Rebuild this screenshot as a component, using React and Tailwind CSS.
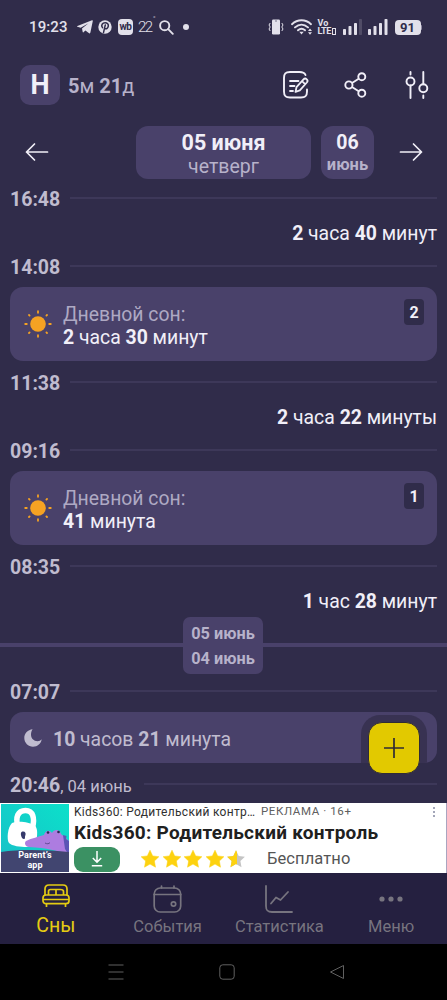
const SunIcon = () => (
  <svg width="28" height="28" viewBox="0 0 28 28" fill="none" stroke="#f5a223" strokeWidth="1.8" strokeLinecap="round">
    <circle cx="14" cy="14" r="7.8" fill="#f5a223" stroke="none" />
    <path d="M14 1.2v1.6M14 25.2v1.6M1.2 14h1.6M25.2 14h1.6M5 5l.6.6M22.4 22.4l.6.6M23 5l-.6.6M5.6 22.4l-.6.6" />
  </svg>
);

const MoonIcon = () => (
  <svg width="18" height="18" viewBox="0 0 18 18" fill="#c0bccf">
    <path d="M8.600.2C3.900.6.300 4.300.300 9c0 4.800 3.900 8.700 8.700 8.700 4.500 0 8.200-3.200 8.700-7.500-.9 1.300-2.500 2-4.200 2C9.800 12.200 7 9.500 7 5.800c0-2.100.5-4 1.600-5.600z" />
  </svg>
);

const Star = ({ half = false }) => (
  <svg width="20" height="20" viewBox="0 0 20 20">
    <path d="M10 1.200l2.700 5.700 6.200.8-4.500 4.300 1.100 6.200L10 15.100l-5.500 3.100 1.100-6.200L1.100 7.700l6.200-.8z" fill={half ? "#c4c4c4" : "#fdd210"} stroke={half ? "none" : "#fdd210"} strokeWidth=".5" />
    {half && <path d="M11 3.300v12.400l-1-.6-5.500 3.100 1.100-6.200L1.100 7.700l6.200-.8L10 1.200z" fill="#fdd210" />}
  </svg>
);

const StatusBar = () => (
  <div className="flex h-[54px] shrink-0 items-center pl-[29px] pr-[25px] text-[#e2e0ea]">
    <span className="w-[39px] text-[15px] font-medium tracking-[0.1px]">19:23</span>
    <svg className="ml-[9px]" width="16" height="14" viewBox="0 0 16 14" fill="currentColor">
      <path d="M.4 6L15 .3c.6-.2.9.1.8.7l-2.4 11.6c-.2.8-.7 1-1.3.6L8.400 10.500l-1.900 1.800c-.4.4-.7.2-.8-.3L5 8.600l6.500-5.300-7.800 4.500L.4 6.800c-.5-.2-.5-.6 0-.8z" />
    </svg>
    <svg className="ml-[5px]" width="14" height="14" viewBox="0 0 14 14">
      <circle cx="7" cy="7" r="6.700" fill="currentColor" />
      <path d="M4.500 7.600C2.600 5 4.600 2.800 7.100 2.800c2.300 0 3.500 1.500 3.200 3.400-.3 1.800-1.800 3-3.400 2.300M7.300 4.900L5.500 12.600" fill="none" stroke="#302c4a" strokeWidth="1.500" strokeLinecap="round" />
    </svg>
    <span className="ml-[6px] flex h-[16px] w-[15px] items-center justify-center rounded-[4px] bg-[#e2e0ea] pb-[1px] text-[10px] font-bold leading-none tracking-[-0.6px] text-[#302c4a]">wb</span>
    <span className="ml-[5px] flex w-[15px] text-[15px] font-light tracking-[-1.500px]">22<span className="-mt-[3px] ml-[1px] text-[8px]">°</span></span>
    <svg className="ml-[6px]" width="15" height="15" viewBox="0 0 15 15" fill="none" stroke="currentColor" strokeWidth="1.900" strokeLinecap="round">
      <circle cx="5.700" cy="5.700" r="4.600" /><path d="M9.200 9.200l4.600 4.600" />
    </svg>
    <span className="ml-[9px] size-[6px] rounded-full bg-[#e2e0ea]" />
    <svg className="ml-auto" width="16" height="16" viewBox="0 0 16 16" fill="none" stroke="currentColor">
      <rect x="4" y=".5" width="8" height="15" rx="1.200" fill="currentColor" stroke="none" />
      <path d="M2.200 4l-1.200 2 1.200 2-1.200 2 1.200 2M13.800 4l1.200 2-1.200 2 1.200 2-1.200 2" strokeWidth="1" />
      <path d="M7 2h2" stroke="#302c4a" strokeWidth=".6" />
    </svg>
    <svg className="ml-[7px]" width="22" height="16" viewBox="0 0 22 16" fill="none" stroke="currentColor" strokeWidth="1.900" strokeLinecap="round">
      <path d="M1 5.200c5.500-5.200 13.500-5.200 19 0M4 8.400c4-3.700 9-3.700 13 0M7 11.300c2.200-1.900 4.800-1.900 7 0" />
      <path d="M8.300 12.700h4.400l-2.200 2.800z" fill="currentColor" stroke="none" />
      <path d="M17 12l2-2.500 2 2.500zM17 13.200h4l-2 2.500z" fill="currentColor" stroke="none" />
    </svg>
    <span className="ml-[5px] flex w-[20px] flex-col text-[9px] font-bold leading-[8.500px]">
      <span>Vo</span>
      <span className="flex items-center tracking-[-0.400px]">LTE<span className="ml-[1px] h-[7px] w-[4px] shrink-0 border border-[#e2e0ea]" /></span>
    </span>
    <svg className="ml-[5px]" width="20" height="16" viewBox="0 0 20 16" fill="currentColor">
      <rect x="0" y="10" width="3" height="6" rx=".8" /><rect x="5.500" y="7" width="3" height="9" rx=".8" /><rect x="11" y="4" width="3" height="12" rx=".8" /><rect x="16" y="0" width="3" height="16" rx=".8" opacity=".18" />
    </svg>
    <svg className="ml-[5px]" width="20" height="16" viewBox="0 0 20 16" fill="currentColor">
      <rect x="0" y="10" width="3" height="6" rx=".8" /><rect x="5.500" y="7" width="3" height="9" rx=".8" /><rect x="11" y="4" width="3" height="12" rx=".8" /><rect x="16.500" y="0" width="3" height="16" rx=".8" />
    </svg>
    <span className="ml-[7px] flex h-[15px] w-[26px] items-center justify-center rounded-[4px] bg-[#e2e0ea] text-[13px] font-bold leading-none text-[#302c4a]">91</span>
    <span className="h-[5px] w-[1.500px] rounded-r bg-[#8f8ba3]" />
  </div>
);

const Header = () => (
  <div className="flex h-[62px] shrink-0 items-center pl-[20px] pr-[18px]">
    <div className="flex size-[40px] items-center justify-center rounded-[10px] bg-[#49416a] text-[27px] font-bold text-[#f1eff8]">H</div>
    <div className="ml-[8px] pt-px text-[20px] text-[#b7b2ca]"><b>5</b>м <b>21</b>д</div>
    <svg className="ml-auto" width="28" height="30" viewBox="0 0 28 30" fill="none" stroke="#f1eff8" strokeWidth="1.900" strokeLinecap="round" strokeLinejoin="round">
      <path d="M23.500 5C22.500 2.500 20.500 2 17.500 2H8C3.500 2 2 3.500 2 8v13.500c0 4.500 1.500 6 6 6h11c4.500 0 6-1.500 6-6V19.500" />
      <path d="M8 11h8.500M8 16h4.500M8 21h3" strokeWidth="1.800" />
      <path d="M14.500 17.200l7-7.800c1.100-1.200 2.300-1 3.300-.1s1 2 0 3.200l-7 7.800-4.300 1.600zM20 11.200l3.100 3" strokeWidth="1.800" />
    </svg>
    <svg className="ml-[34px]" width="23" height="26" viewBox="0 0 23 26" fill="none" stroke="#f1eff8" strokeWidth="1.900">
      <circle cx="4.900" cy="13" r="3.600" /><circle cx="17.800" cy="4.700" r="3.500" /><circle cx="17.800" cy="21.200" r="3.500" />
      <path d="M8 11l6.700-4.300M8 15l6.700 4.200" />
    </svg>
    <svg className="ml-[38px]" width="24" height="28" viewBox="0 0 24 28" fill="none" stroke="#f1eff8" strokeWidth="1.900" strokeLinecap="round">
      <circle cx="5.500" cy="10.500" r="4" /><circle cx="18.300" cy="17.300" r="4" />
      <path d="M5.500 1v2.500M5.500 14.500V27M18.300 1v12.300M18.300 24.500V27" />
    </svg>
  </div>
);

const Arrow = ({ right = false }) => (
  <svg className={right ? "rotate-180" : ""} width="24" height="20" viewBox="0 0 24 20" fill="none" stroke="#f1eff8" strokeWidth="1.700" strokeLinecap="round" strokeLinejoin="round">
    <path d="M22.500 10H1.500M9.500 2L1.500 10l8 8" />
  </svg>
);

const DateRow = () => (
  <div className="flex h-[62px] shrink-0 items-center pl-[25px] pr-[24px] pt-[10px]">
    <Arrow />
    <div className="ml-[87px] flex h-[53px] w-[175px] flex-col items-center rounded-[12px] bg-[#49416a] pt-[4px]">
      <span className="text-[21.500px] font-bold leading-[25px] text-[#f1eff8]">05 июня</span>
      <span className="text-[19.500px] leading-[23px] text-[#b7b2ca]">четверг</span>
    </div>
    <div className="ml-[10px] flex h-[53px] w-[53px] flex-col items-center rounded-[12px] bg-[#49416a] pt-[5px]">
      <span className="text-[19.500px] font-bold leading-[24px] text-[#f1eff8]">06</span>
      <span className="text-[16.500px] font-bold leading-[20px] text-[#b7b2ca]">июнь</span>
    </div>
    <span className="ml-auto"><Arrow right /></span>
  </div>
);

const TimeRow = ({ time, note }) => (
  <div className="flex h-[42px] shrink-0 items-center px-[10px]">
    <span className="pt-[4px] text-[19.500px] font-bold leading-[24px] text-[#c0bccf]">{time}</span>
    {note && <span className="mr-[2px] pt-[6px] text-[16.500px] leading-[24px] text-[#c0bccf]">{note}</span>}
    <span className="ml-[10px] h-[1.500px] flex-1 bg-[#3d3859]" />
  </div>
);

const Wake = ({ children }) => (
  <div className="h-[26px] shrink-0 pr-[10px] pt-[3px] text-right text-[19.400px] leading-[24px] text-[#f1eff8]">{children}</div>
);

const Nap = ({ n, children }) => (
  <div className="mx-[10px] flex h-[74px] shrink-0 rounded-[13px] bg-[#49416a] pl-[14px] pr-[13px]">
    <div className="self-center"><SunIcon /></div>
    <div className="ml-[11px] pt-[16px] text-[19.400px] leading-[23px] text-[#f1eff8]">
      <div className="text-[#aea9c3]">Дневной сон:</div>
      <div>{children}</div>
    </div>
    <div className="ml-auto mt-[12px] flex h-[26px] w-[20px] items-center justify-center rounded-[4px] bg-[#302c4a] pt-[2px] text-[16px] font-bold text-[#f1eff8]">{n}</div>
  </div>
);

const AdArtwork = () => (
  <div className="relative ml-px mt-px h-[68px] w-[68px] shrink-0 overflow-hidden bg-[#10d2c8]">
    <svg width="68" height="68" viewBox="0 0 68 68">
      <defs>
        <linearGradient id="sky" x1="0" y1="1" x2="1" y2="0"><stop offset="0" stopColor="#18bfc8" /><stop offset="1" stopColor="#0ce0ca" /></linearGradient>
      </defs>
      <path d="M0 0h68v68H0z" fill="url(#sky)" />
      <path d="M17 23c-3-10 0-16.500 7.500-16.500S34 14 31.500 24" fill="none" stroke="#fff" strokeWidth="5.500" />
      <path d="M11 19c6-2.500 17-1 22 2 3 2 3.500 6 3 11-.7 7-3.500 11-10 11-7 0-15-1-18-4-2.500-3-1.500-16 3-20z" fill="#fff" />
      <path d="M20.500 28c3-1.500 5 1 3.800 3.500-.7 1.500.2 3-1 3.500-2.500.8-4.500-5.500-2.800-7z" fill="#36396b" />
      <path d="M25 37c6-3 12-4 18-6 1-4 5-6 8-2 2-4 8-4 9 1l8 7v13c-12-3-22-6-40-7-4-.5-5-4-3-6z" fill="#ad7ce0" />
      <path d="M62 31l3.500 1-.5 3 3 2v14l-4-6z" fill="#5b55b5" />
      <circle cx="47" cy="28.500" r="1.300" fill="#292b4f" /><circle cx="57.500" cy="28" r="1.300" fill="#292b4f" />
      <path d="M44 39c2 1.200 4 1 5-.5" fill="none" stroke="#4c3c80" strokeWidth=".8" />
      <path d="M0 48c20-3 48-2 68 0v20H0z" fill="#414570" />
    </svg>
    <div className="absolute inset-x-0 top-[47px] flex flex-col items-center text-[9px] font-bold leading-[9.500px] tracking-[0.100px] text-white"><span>Parent’s</span><span>app</span></div>
  </div>
);

const Ad = () => (
  <div className="flex h-[70px] shrink-0 border-r border-[#a9a5c0] bg-white">
    <AdArtwork />
    <div className="flex min-w-0 flex-1 flex-col pl-[5px] pr-[10px]">
      <div className="flex h-[17px] items-center text-[12px] text-[#303030]">
        <span className="w-[180px] whitespace-nowrap tracking-[0.300px]">Kids360: Родительский контр…</span>
        <span className="ml-[7px] whitespace-nowrap text-[11.500px] tracking-[0.600px] text-[#606060]">РЕКЛАМА · 16+</span>
        <svg className="ml-auto" width="4" height="12" viewBox="0 0 4 12" fill="#8588a2"><circle cx="2" cy="2" r="1" /><circle cx="2" cy="6" r="1" /><circle cx="2" cy="10" r="1" /></svg>
      </div>
      <div className="whitespace-nowrap text-[19px] font-bold leading-[26px] tracking-[0.250px] text-[#202020]">Kids360: Родительский контроль</div>
      <div className="flex h-[26px] items-center">
        <div className="flex h-[25px] w-[46px] items-center justify-center rounded-[9px] bg-[#3b9163]">
          <svg width="12" height="16" viewBox="0 0 12 16" fill="none" stroke="#fff" strokeWidth="1.500"><path d="M6 0v11M1.800 7L6 11.200 10.200 7M.8 14.800h10.400" /></svg>
        </div>
        <div className="ml-[20px] flex gap-[1.500px]"><Star /><Star /><Star /><Star /><Star half /></div>
        <span className="ml-[21px] text-[16.500px] tracking-[0.100px] text-[#555]">Бесплатно</span>
      </div>
    </div>
  </div>
);

const BedIcon = () => (
  <svg width="28" height="24" viewBox="0 0 28 24" fill="none" stroke="currentColor" strokeWidth="1.700" strokeLinejoin="round">
    <path d="M3 11V5c0-2.500 1.200-4 4-4h14c2.800 0 4 1.500 4 4v6M6.500 11V7.500C6.500 6 7.300 5.500 8.500 5.500h9.800c1.800 0 3.200.5 3.200 2V11M14 5.500V11" />
    <rect x="1" y="11" width="26" height="8.700" rx="3" /><path d="M1 15.500h26M4.500 19.700V23M23.500 19.700V23" />
  </svg>
);
const CalIcon = () => (
  <svg width="29" height="28" viewBox="0 0 29 28" fill="none" stroke="currentColor" strokeWidth="1.700" strokeLinecap="round">
    <rect x="1.200" y="3" width="26.500" height="24" rx="6" /><path d="M1.200 9.500h26.500M8.500 1v2M21 1v2" /><circle cx="20.500" cy="19" r="2.200" />
  </svg>
);
const ChartIcon = () => (
  <svg width="28" height="28" viewBox="0 0 28 28" fill="none" stroke="currentColor" strokeWidth="1.800" strokeLinecap="round" strokeLinejoin="round">
    <path d="M1 1v20c0 4.500 1.500 6 6 6h20M6 18.500l5-6 4.500 2.500 7.500-8" />
  </svg>
);
const DotsIcon = () => (
  <svg width="24" height="28" viewBox="0 0 24 28" fill="currentColor"><circle cx="3" cy="14" r="2.600" /><circle cx="12" cy="14" r="2.600" /><circle cx="21" cy="14" r="2.600" /></svg>
);

const Tab = ({ icon, label }) => (
  <div className="flex flex-1 flex-col items-center pt-[11px] text-[#77747f]">
    <div className="flex h-[30px] items-center">{icon}</div>
    <span className="mt-px text-[16.500px] leading-[24px]">{label}</span>
  </div>
);

export default function App() {
  return (
    <div className="relative flex h-[1000px] w-[447px] flex-col overflow-hidden bg-[#302c4a] font-[Roboto,sans-serif]">
      <StatusBar />
      <Header />
      <DateRow />
      <div className="flex h-[625px] shrink-0 flex-col overflow-hidden">
        <div className="-mt-px flex flex-col">
          <TimeRow time="16:48" />
          <Wake><b>2</b> часа <b>40</b> минут</Wake>
          <TimeRow time="14:08" />
          <Nap n="2"><b>2</b> часа <b>30</b> минут</Nap>
          <TimeRow time="11:38" />
          <Wake><b>2</b> часа <b>22</b> минуты</Wake>
          <TimeRow time="09:16" />
          <Nap n="1"><b>41</b> минута</Nap>
          <TimeRow time="08:35" />
          <Wake><b>1</b> час <b>28</b> минут</Wake>
          <div className="flex h-[57px] shrink-0 items-start pt-[4px]">
            <span className="mt-[26px] h-[4px] w-[183px] bg-[#49416a]" />
            <div className="flex h-[57px] w-[80px] shrink-0 flex-col items-center rounded-[7px] bg-[#49416a] pt-[5px] text-[16.300px] font-bold leading-[24.500px] text-[#b7b2ca]"><span>05 июнь</span><span>04 июнь</span></div>
            <span className="mt-[26px] h-[4px] flex-1 bg-[#49416a]" />
          </div>
          <TimeRow time="07:07" />
          <div className="relative mx-[10px] flex h-[51px] shrink-0 items-center overflow-hidden rounded-[13px] bg-[#49416a] pl-[14px] text-[19.400px] text-[#c0bccf]">
            <MoonIcon />
            <span className="ml-[11px] pt-[4px]"><b>10</b> часов <b>21</b> минута</span>
            <span className="absolute right-[10px] top-[3px] h-[66px] w-[66px] rounded-[19px] bg-[#383252]" />
          </div>
          <TimeRow time="20:46" note=", 04 июнь" />
        </div>
      </div>
      <Ad />
      <div className="flex h-[71px] shrink-0 bg-[#252040]">
        <div className="flex flex-1 flex-col items-center pt-[9px] text-[#e5cc12]">
          <div className="flex h-[28px] items-center"><BedIcon /></div>
          <span className="mt-px text-[19.500px] leading-[30px]">Сны</span>
        </div>
        <Tab icon={<CalIcon />} label="События" />
        <Tab icon={<ChartIcon />} label="Статистика" />
        <Tab icon={<DotsIcon />} label="Меню" />
      </div>
      <div className="flex h-[56px] shrink-0 items-center justify-between bg-black pl-[108px] pr-[102px]">
        <svg width="16" height="16" viewBox="0 0 16 16" stroke="#606060" strokeWidth="1"><path d="M.5 1h15M.5 8h15M.5 15h15" /></svg>
        <svg width="16" height="16" viewBox="0 0 16 16" fill="none" stroke="#606060"><rect x=".8" y=".8" width="14.400" height="14.400" rx="3" /></svg>
        <svg width="16" height="16" viewBox="0 0 16 16" fill="none" stroke="#606060" strokeLinejoin="round"><path d="M14.500 1.500v13L1.500 8z" /></svg>
      </div>
      <button className="absolute left-[368px] top-[722px] flex size-[52px] items-center justify-center rounded-[14px] border border-[#302c35] bg-[#e2c900]" aria-label="+">
        <svg width="20" height="20" viewBox="0 0 20 20" stroke="#302c35" strokeWidth="1.700"><path d="M10 0v20M0 10h20" /></svg>
      </button>
    </div>
  );
}
